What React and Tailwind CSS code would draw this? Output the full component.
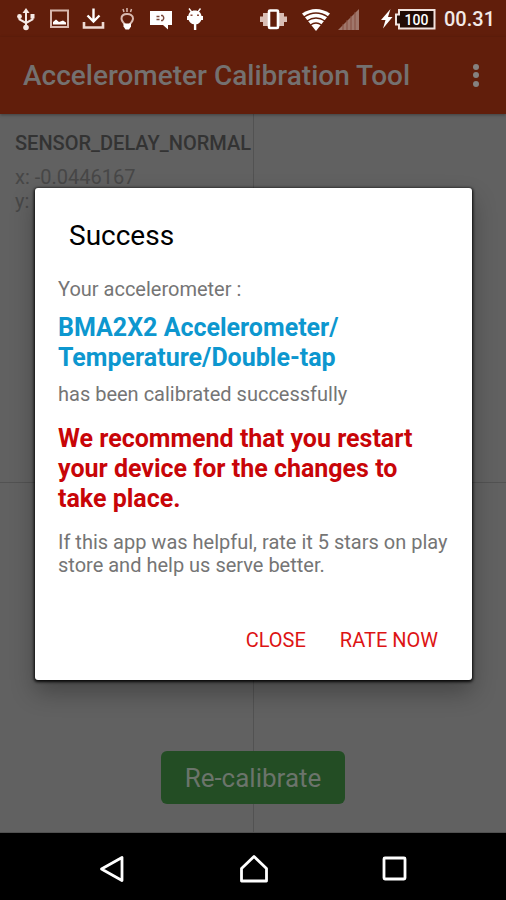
const notifications = [UsbIcon, PictureIcon, DownloadIcon, BulbIcon, ChatIcon, AndroidIcon];

export default function App() {
  return (
    <div className="relative flex min-h-screen flex-col bg-[#616161] font-[Roboto,sans-serif]">
      <StatusBar />
      <AppBar />
      <SensorGrid />
      <SuccessDialog />
      <NavBar />
    </div>
  );
}

function StatusBar() {
  return (
    <div className="flex h-[37px] items-center justify-between bg-[#611e0b] pr-[11px] pl-[14px] text-white">
      <div className="flex items-center gap-[10px]">
        {notifications.map((Icon, i) => (
          <Icon key={i} />
        ))}
      </div>
      <div className="flex items-center">
        <VibrateIcon />
        <WifiIcon />
        <SignalIcon />
        <BatteryIcon />
        <span className="ml-2 text-[20px] leading-6 font-medium text-[#f3e9e6]">00.31</span>
      </div>
    </div>
  );
}

function AppBar() {
  return (
    <header className="z-10 flex h-[77px] items-center justify-between bg-[#611e0b] pr-4 pl-[23px] text-[#747170] shadow-[0_1px_3px_rgba(0,0,0,0.35)]">
      <h1 className="text-[28px] leading-8 font-medium">Accelerometer Calibration Tool</h1>
      <button type="button" aria-label="More options" className="flex w-7 justify-center">
        <svg width="8" height="24" viewBox="0 0 8 24" fill="#858180">
          <circle cx="4" cy="3" r="3" />
          <circle cx="4" cy="11" r="3" />
          <circle cx="4" cy="20" r="3" />
        </svg>
      </button>
    </header>
  );
}

function SensorGrid() {
  return (
    <main className="relative grid flex-1 grid-cols-2 grid-rows-[370fr_349fr] border-b border-[#505050]">
      <section className="border-b border-[#525252] pt-[17px] pl-[15px] text-[20px] leading-6 text-[#474747]">
        <h2 className="mb-2.5 font-medium text-[#333]">SENSOR_DELAY_NORMAL</h2>
        <p>x: -0.0446167</p>
        <p>y:</p>
      </section>
      <section className="border-b border-l border-[#525252]" />
      <section />
      <section className="border-l border-[#525252]" />
      <div className="absolute inset-x-0 bottom-7 flex justify-center">
        <button type="button" className="rounded-md bg-[#234d24] px-6 pt-3 pb-2.5 text-[26px] leading-[31px] text-[#6b746b]">
          Re-calibrate
        </button>
      </div>
    </main>
  );
}

function SuccessDialog() {
  return (
    <div className="absolute inset-x-0 top-[37px] bottom-[69px] z-20 flex items-center pr-[34px] pl-[35px]">
      <div
        role="dialog"
        aria-labelledby="dialog-title"
        className="flex-1 rounded-[3px] bg-white px-[23px] pt-8 pb-7 text-[20px] leading-[23px] text-[#757575] shadow-[0_1px_3px_1px_rgba(0,0,0,0.9),0_12px_24px_rgba(0,0,0,0.3)]"
      >
        <h2 id="dialog-title" className="pl-[11px] text-[28px] leading-8 text-black">Success</h2>
        <p className="mt-[26px]">Your accelerometer :</p>
        <p className="mt-3 text-[25px] leading-[30px] font-bold text-[#0d97cf]">
          BMA2X2 Accelerometer/
          <br />
          Temperature/Double-tap
        </p>
        <p className="mt-2.5">has been calibrated successfully</p>
        <p className="mt-[18px] text-[25px] leading-[30px] font-bold text-[#c80508]">
          We recommend that you restart your device for the changes to take place.
        </p>
        <p className="mt-[17px]">If this app was helpful, rate it 5 stars on play store and help us serve better.</p>
        <div className="mt-[52px] flex justify-end gap-[34px] pr-[11px] text-[#dd1414]">
          <button type="button">CLOSE</button>
          <button type="button">RATE NOW</button>
        </div>
      </div>
    </div>
  );
}

function NavBar() {
  return (
    <nav className="flex h-[67px] items-center justify-center gap-[109px] bg-black pt-1 pl-0.5">
      <NavButton label="Back">
        <path d="M25 4.500v23L4.500 16z" />
      </NavButton>
      <NavButton label="Home">
        <path d="M3.500 15.500 16 3.500l12.500 12V28h-25z" />
      </NavButton>
      <NavButton label="Recent apps">
        <rect x="5" y="5" width="21" height="21" rx="1" />
      </NavButton>
    </nav>
  );
}

function NavButton({ label, children }) {
  return (
    <button type="button" aria-label={label}>
      <svg width="32" height="32" viewBox="0 0 32 32" fill="none" stroke="#fff" strokeWidth="2.800" strokeLinejoin="round">
        {children}
      </svg>
    </button>
  );
}

function UsbIcon() {
  return (
    <svg width="24" height="24" viewBox="0 0 24 24" fill="none" stroke="#f6e9e5" strokeWidth="2">
      <path d="M12 4v16M5.500 9v3.500L12 16l6.500-3.500V9" />
      <path d="M12 1 8.500 6h7z" fill="#f6e9e5" stroke="none" />
      <circle cx="12" cy="20.500" r="2.800" fill="#f6e9e5" stroke="none" />
      <circle cx="5.500" cy="9.500" r="2.400" fill="#f6e9e5" stroke="none" />
      <path d="M16.500 7h4v4.500h-4z" fill="#f6e9e5" stroke="none" />
    </svg>
  );
}

function PictureIcon() {
  return (
    <svg width="24" height="24" viewBox="0 0 24 24">
      <rect x="3" y="3.500" width="17" height="16.500" fill="none" stroke="#d9b9af" strokeWidth="2" />
      <path d="M5 17.500v-2.500l3-2.500 3 2.500 4-1.500 3 2v2z" fill="#fff" />
    </svg>
  );
}

function DownloadIcon() {
  return (
    <svg width="24" height="24" viewBox="0 0 24 24" fill="none" stroke="#fff" strokeWidth="2.400">
      <path d="M11.500 1.500v13M5.500 8.500l6 6 6-6" />
      <path d="M2 15v5.500h19V15" stroke="#eed9d2" strokeWidth="2.600" />
    </svg>
  );
}

function BulbIcon() {
  return (
    <svg width="24" height="24" viewBox="0 0 24 24" fill="none" stroke="#d9b9af" strokeWidth="2">
      <path d="M9 17.500C7 15.500 5.500 14 5.500 11.500c0-3 2.500-4.500 5.500-4.500s6 1.500 6 4.500c0 2.500-1.500 4-3.500 6" />
      <path d="M11 1v4M7 2l1 3M15.500 2l-1 3" strokeWidth="1.500" />
      <path d="M7.500 16.500h7.500v3L13 22.500H9.500l-2-3z" fill="#fff" stroke="none" />
    </svg>
  );
}

function ChatIcon() {
  return (
    <svg width="24" height="24" viewBox="0 0 24 24">
      <path d="M0 4h22v14h-4v4.500L13 18H0z" fill="#fff" />
      <path d="M6.500 9.500h3M6.500 12.500h3M11 8.500h1.500q2.500 2.500 0 5H11" fill="none" stroke="#7b4a3c" strokeWidth="1.400" />
    </svg>
  );
}

function AndroidIcon() {
  return (
    <svg width="24" height="24" viewBox="0 0 24 24">
      <path d="M5 1.500l3 4M16.500 1.500l-3 4" stroke="#fff" strokeWidth="1.400" />
      <path d="M10.800 3.500c4 0 6.200 2.200 6.700 5.500h1.500v4h-1.700c-1 2.800-3 4-5 4.300v5.700h-2.400v-5.700c-2.300-.3-4.300-1.500-5.300-4.300H3V9h1.300c.5-3.300 2.500-5.500 6.500-5.500z" fill="#fff" />
      <path d="M6.500 7.500h2v1.600h-2zM13 7.500h2v1.600h-2z" fill="#8a4a38" />
    </svg>
  );
}

function VibrateIcon() {
  return (
    <svg className="mr-[14px]" width="28" height="24" viewBox="0 0 28 24">
      <path d="M0 9.500h3V15H0zM24 9.500h3V15h-3zM3 6h5v13H3zM19 6h5v13h-5z" fill="#d9bdb4" />
      <rect x="9" y="3.500" width="9" height="17.500" rx="1" fill="#611e0b" stroke="#fff" strokeWidth="2.600" />
    </svg>
  );
}

function WifiIcon() {
  return (
    <svg className="mr-2" width="28" height="24" viewBox="0 0 28 24">
      <path d="M0 6.500Q14-2.500 28 6.500L14 24z" fill="#fff" />
      <path d="M2 10q12-8 24 0M5 14q9-6 18 0M8.500 18q5.500-4 11 0" fill="none" stroke="#611e0b" strokeWidth="1.300" />
    </svg>
  );
}

function SignalIcon() {
  return (
    <svg className="mr-5" width="22" height="24" viewBox="0 0 22 24">
      <path d="M21 2v21H0z" fill="#a0776b" />
      <path d="M5 17v6M9 13v10M13 9v14M17 5v18" stroke="#854f40" strokeWidth="1" />
    </svg>
  );
}

function BatteryIcon() {
  return (
    <svg width="56" height="24" viewBox="0 0 56 24">
      <path d="M10.500 2 1 13h4.500L3 21.500 12.500 10H8z" fill="#fff" />
      <path d="M19 3h35.500v18.500H19v-4h-3v-10h3z" fill="#210b05" stroke="#f1e2dd" strokeWidth="2" />
      <text x="36.500" y="17.500" fill="#fff" fontSize="14" fontWeight="500" textAnchor="middle">100</text>
    </svg>
  );
}
